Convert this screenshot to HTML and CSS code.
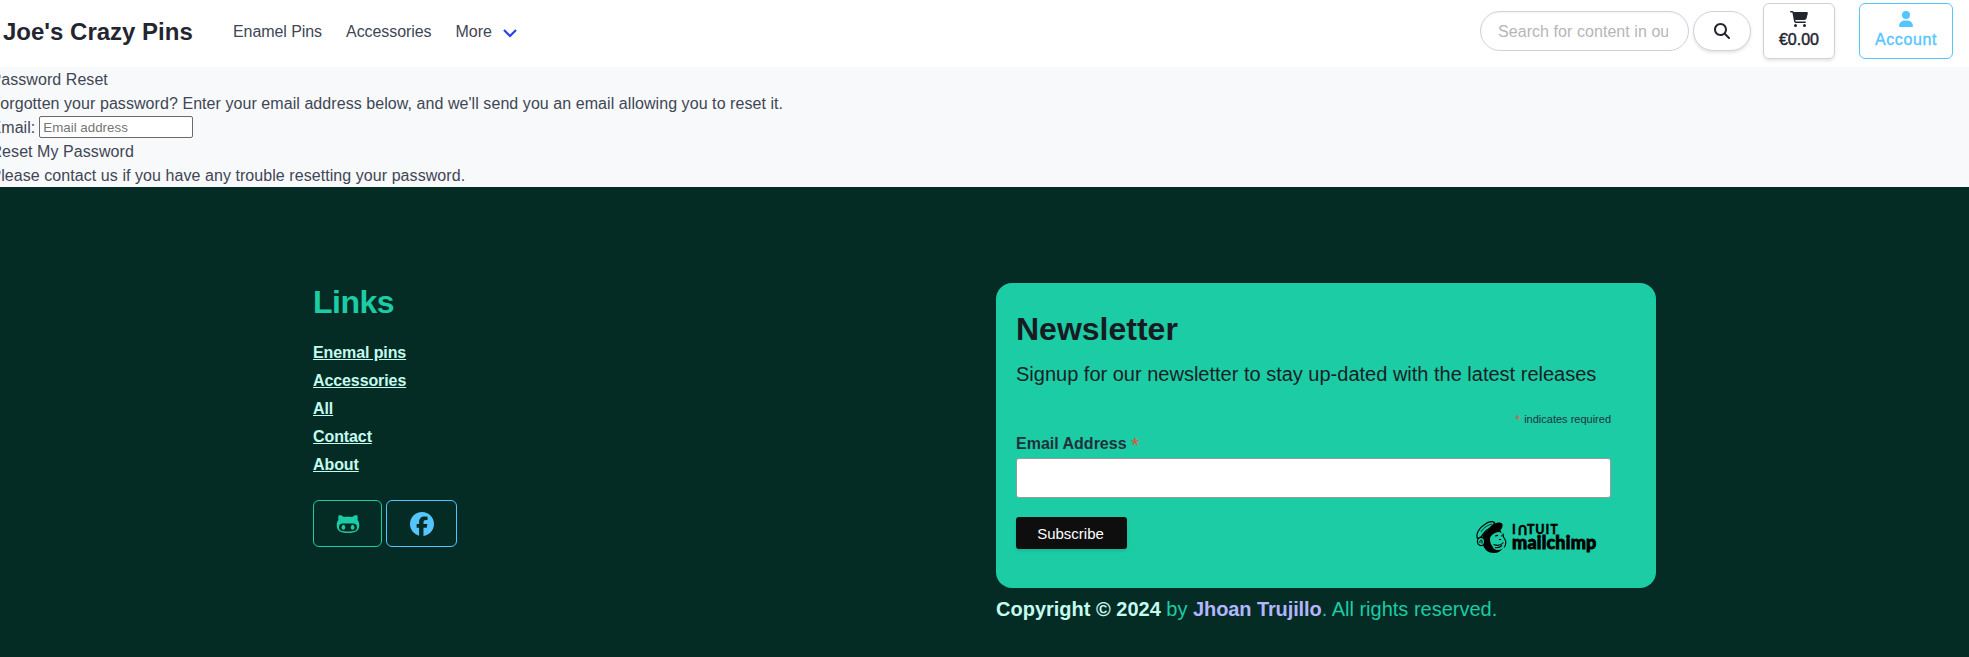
FILE: index.html
```html
<!DOCTYPE html>
<html lang="en">
<head>
<meta charset="utf-8">
<title>Joe's Crazy Pins</title>
<link rel="stylesheet" href="styles.css">
</head>
<body>
<nav class="navbar">
  <a class="brand">Joe's Crazy Pins</a>
  <div class="menu">
    <a>Enamel Pins</a>
    <a>Accessories</a>
    <a class="more">More <svg class="chevron" viewBox="0 0 14 9"><path d="M1 1l6 6 6-6" fill="none" stroke="#2e3cf5" stroke-width="2.2"/></svg></a>
  </div>
  <div class="tools">
    <input class="search" type="text" placeholder="Search for content in our store">
    <button class="search-btn" aria-label="Search"><svg width="16" height="16" viewBox="0 0 512 512"><path fill="currentColor" d="M416 208c0 45.900-14.900 88.300-40 122.700L502.600 457.400c12.500 12.500 12.500 32.800 0 45.300s-32.800 12.500-45.300 0L330.700 376c-34.400 25.200-76.800 40-122.700 40C93.100 416 0 322.900 0 208S93.100 0 208 0S416 93.100 416 208zM208 352a144 144 0 1 0 0-288 144 144 0 1 0 0 288z"/></svg></button>
    <a class="box cart"><svg width="18" height="16" viewBox="0 0 576 512"><path fill="currentColor" d="M0 24C0 10.700 10.700 0 24 0H69.500c22 0 41.500 12.800 50.600 32h411c26.300 0 45.500 25 38.600 50.400l-41 152.300c-8.500 31.400-37 53.300-69.500 53.300H170.700l5.400 28.500c2.200 11.300 12.100 19.500 23.600 19.500H488c13.300 0 24 10.700 24 24s-10.700 24-24 24H199.700c-34.600 0-64.300-24.600-70.700-58.500L77.400 54.500c-.7-3.800-4-6.500-7.900-6.500H24C10.700 48 0 37.300 0 24zM128 464a48 48 0 1 1 96 0 48 48 0 1 1 -96 0zm336-48a48 48 0 1 1 0 96 48 48 0 1 1 0-96z"/></svg><span>€0.00</span></a>
    <a class="box account"><svg width="14" height="16" viewBox="0 0 448 512"><path fill="currentColor" d="M224 256A128 128 0 1 0 224 0a128 128 0 1 0 0 256zm-45.700 48C79.800 304 0 383.800 0 482.300C0 498.700 13.300 512 29.700 512H418.300c16.400 0 29.700-13.300 29.700-29.700C448 383.800 368.200 304 269.700 304H178.300z"/></svg><span>Account</span></a>
  </div>
</nav>
<main class="reset">
  <div>Password Reset</div>
  <p>Forgotten your password? Enter your email address below, and we'll send you an email allowing you to reset it.</p>
  <div class="field"><label>Email:</label><input type="email" placeholder="Email address"></div>
  <div>Reset My Password</div>
  <p>Please contact us if you have any trouble resetting your password.</p>
</main>
<footer class="footer">
  <section class="links">
    <h2>Links</h2>
    <ul>
      <li><a>Enemal pins</a></li>
      <li><a>Accessories</a></li>
      <li><a>All</a></li>
      <li><a>Contact</a></li>
      <li><a>About</a></li>
    </ul>
    <div class="social">
      <a class="git" aria-label="GitHub"><svg width="24" height="20" viewBox="0 0 24 20"><path fill="currentColor" fill-rule="evenodd" d="M3 1c-.9 1.600-1 3.500-.5 5C1.200 7.400.7 9 .7 11c0 6 3.700 8 11.300 8s11.300-2 11.300-8c0-2-.5-3.600-1.800-5 .5-1.500.4-3.400-.5-5-1.800.1-3.500.9-4.900 2-2.700-.5-5.500-.5-8.200 0C6.500 1.900 4.800 1.100 3 1zM7 9.600h10c2.500 0 4 1.200 4 3.600 0 3.500-3 4.300-9 4.300s-9-.8-9-4.300c0-2.400 1.500-3.600 4-3.600z"/><ellipse cx="7.400" cy="13.300" rx="1.800" ry="2.500" fill="currentColor"/><ellipse cx="16.600" cy="13.300" rx="1.800" ry="2.500" fill="currentColor"/></svg></a>
      <a class="fb" aria-label="Facebook"><svg width="24" height="24" viewBox="0 0 512 512"><path fill="currentColor" d="M512 256C512 114.600 397.400 0 256 0S0 114.600 0 256C0 376 82.700 476.800 194.200 504.500V334.200H141.400V256h52.800V222.300c0-87.100 39.400-127.500 125-127.500c16.200 0 44.200 3.200 55.700 6.400V172c-6-.6-16.500-1-29.600-1c-42 0-58.200 15.900-58.200 57.200V256h83.600l-14.400 78.200H287V510.100C413.800 494.800 512 386.900 512 256h0z"/></svg></a>
    </div>
  </section>
  <section class="right">
    <div class="card">
      <h2>Newsletter</h2>
      <p class="lead">Signup for our newsletter to stay up-dated with the latest releases</p>
      <div class="required"><i>*</i> indicates required</div>
      <label class="label">Email Address <i>*</i></label>
      <input class="email" type="email">
      <div class="actions">
        <button class="subscribe">Subscribe</button>
        <div class="chimp">
          <svg width="31" height="33" viewBox="0 0 31 33">
            <path d="M6 17C8 10 14 6 24 8l2 5H18c-3 1-4 3-4 5 0 3 1 6 3 8l10 1c-2 3-5 5-9 5-6 0-9-3-11-7.500L6 22z"/>
            <path d="M1.500 17.500C-.5 13 3 7 8 4c4-3 8-4 10.500-2.500L17 6C12 7 8 11 5 16z" fill="#1ccca5" stroke="#000" stroke-width="1.200"/>
            <path d="M5 11C8 6 12 4 16 3" fill="none" stroke="#000" stroke-width=".8"/>
            <path d="M16 4c3-2.500 8-3.500 10-1.500 1.500 2 0 5-1.500 6.500-4-1.500-9-.5-14 3 1-3 3-6 5.500-8z"/>
            <ellipse cx="5" cy="20.500" rx="3.600" ry="4.200" fill="#1ccca5" stroke="#000" stroke-width="1.200"/>
            <path d="M4 22c-1-2 1-3.500 2-2.500v3" fill="none" stroke="#000"/>
            <path d="M18 12.500c3-2 6-2 8 0 1 2 1 4 2 5 2 1.500 2 4.500 1 7-1 2.500-4 4.500-7 4.500-4 0-6-2.500-5-5.500 0-2-2-3-2-5.500 0-2 1-4.500 3-5.500z" fill="#1ccca5"/>
            <path d="M27 12.500c0 3 1 5 2 6 1.500 2 .8 6-1 8M19 15l3-.6M25 15l1.500-.2M23 18.500h2M17.500 23.500c4 1.500 8 .5 10-2M19 26.500c3 .8 5 0 7-2" fill="none" stroke="#000" stroke-width="1.100"/>
          </svg>
          <div class="wordmark"><span class="intuit">I<span class="arch">U</span>TUIT</span><span class="mc">mailchimp</span></div>
        </div>
      </div>
    </div>
    <p class="copy"><strong>Copyright © 2024</strong> by <a>Jhoan Trujillo</a>. All rights reserved.</p>
  </section>
</footer>
</body>
</html>
```
FILE: styles.css
```css
* { box-sizing: border-box; margin: 0; padding: 0; }
body { width: 1969px; height: 657px; overflow: hidden; background: #042b24; color: #404654; font: 16px/24px "Liberation Sans", Arial, sans-serif; }
input, button { font-family: inherit; }
i { font-style: normal; color: #e8502f; }
.navbar { height: 67px; background: #fff; display: flex; align-items: flex-start; padding: 3px 16px 0 3px; }
.brand { font-weight: 700; font-size: 24px; line-height: 57px; color: #24262f; width: 230px; white-space: nowrap; }
.menu { display: flex; gap: 24px; line-height: 57px; white-space: nowrap; letter-spacing: -.07px; }
.chevron { width: 14px; height: 9px; margin-left: 7px; vertical-align: -1px; }
.tools { display: flex; margin-left: auto; }
.search { width: 209px; height: 40px; margin-top: 8px; border: 1px solid #d0d1dc; border-radius: 20px; padding: 1px 20px 0 17px; font-size: 16px; letter-spacing: .06px; color: #404654; box-shadow: inset 0 1px 2px rgba(10,10,10,.05); }
.search::placeholder { color: #b5b6b9; }
.search-btn { width: 58px; height: 40px; margin: 8px 12px 0 4px; border: 1px solid #d0d1dc; border-radius: 20px; background: #fff; color: #24262f; display: grid; place-items: center; box-shadow: 0 2px 3px rgba(10,10,10,.1); }
.box { height: 56px; border: 1px solid #d0d1dc; border-radius: 6px; display: flex; flex-direction: column; align-items: center; padding-top: 7px; font-weight: 500; color: #24262f; }
.box span { line-height: 26px; }
.cart { width: 72px; margin-right: 24px; box-shadow: 0 2px 3px rgba(10,10,10,.1); -webkit-text-stroke: .45px; }
.account { width: 94px; color: #55c5ff; border-color: #55c5ff; letter-spacing: .6px; -webkit-text-stroke: .35px; }
.reset { height: 120px; background: #f8f9fb; padding-top: 1px; white-space: nowrap; letter-spacing: .063px; }
.reset > * { margin-left: -9.500px; height: 24px; }
.reset > :last-child { height: 23px; }
.field { display: flex; align-items: center; gap: 4px; }
.field input { width: 154px; height: 22px; margin-top: -2px; border: 1px solid #6b6b6b; border-radius: 2px; padding: 1px 3px; font-size: 13.333px; background: #fff; }
.field input::placeholder { color: #757575; }
.footer { height: 470px; padding: 96px 313px 0; display: grid; grid-template-columns: 683px 660px; }
h2 { font-size: 32px; line-height: 36px; font-weight: 700; }
.links h2 { color: #1ccca5; letter-spacing: -.5px; line-height: 38px; height: 36px; }
.links ul { list-style: none; margin-top: 20px; letter-spacing: -.1px; }
.links li { height: 28px; line-height: 28px; }
.links a { color: #c4fbef; font-weight: 700; text-decoration: underline; }
.social { display: flex; gap: 4px; margin-top: 21px; }
.social a { width: 69px; height: 47px; border: 1px solid; border-radius: 6px; display: grid; place-items: center; color: #1ccca5; }
.social .fb { width: 71px; color: #55c5ff; }
.card { height: 305px; background: #1ccca5; border-radius: 16px; padding: 28px 45px 0 20px; display: flex; flex-direction: column; color: #21313a; }
.card h2 { color: #181b22; }
.lead { font-size: 20px; line-height: 30px; margin-top: 12px; color: #181f26; white-space: nowrap; }
.required { font-size: 11px; line-height: 16px; text-align: right; margin-top: 22px; }
.required i { font-size: 13px; line-height: 14px; margin-right: 1px; vertical-align: -1px; }
.label { font-weight: 700; line-height: 24px; height: 24px; margin-top: 5px; }
.label i { font-weight: 400; font-size: 21px; line-height: 20px; vertical-align: -3px; }
.email { height: 40px; width: 595px; border: 1px solid #9a9a9a; border-radius: 3px; margin-top: 2px; background: #fff; }
.actions { display: flex; justify-content: space-between; margin-top: 19px; padding-right: 14px; }
.subscribe { width: 111px; height: 32px; border: 0; border-radius: 3px; background: #0e0e0e; color: #fff; font-size: 15px; padding-right: 2px; box-shadow: 0 2px 3px rgba(10,10,10,.1); }
.chimp { display: flex; gap: 5px; margin-top: 4px; color: #000; width: 121px; }
.wordmark { display: flex; flex-direction: column; font-family: Lato, sans-serif; font-weight: 900; white-space: nowrap; }
.intuit { font-size: 12.500px; line-height: 15px; letter-spacing: .9px; font-weight: 900; margin-top: 1px; -webkit-text-stroke: .3px; }
.arch { display: inline-block; transform: rotate(180deg); }
.mc { font-size: 18px; line-height: 16px; letter-spacing: .2px; -webkit-text-stroke: .8px; margin-top: -3px; }
.copy { font-size: 20px; line-height: 30px; margin-top: 6px; color: #1ccca5; white-space: nowrap; }
.copy strong { color: #c4fbef; }
.copy a { font-weight: 700; color: #b4b5ff; letter-spacing: -.1px; }
```
